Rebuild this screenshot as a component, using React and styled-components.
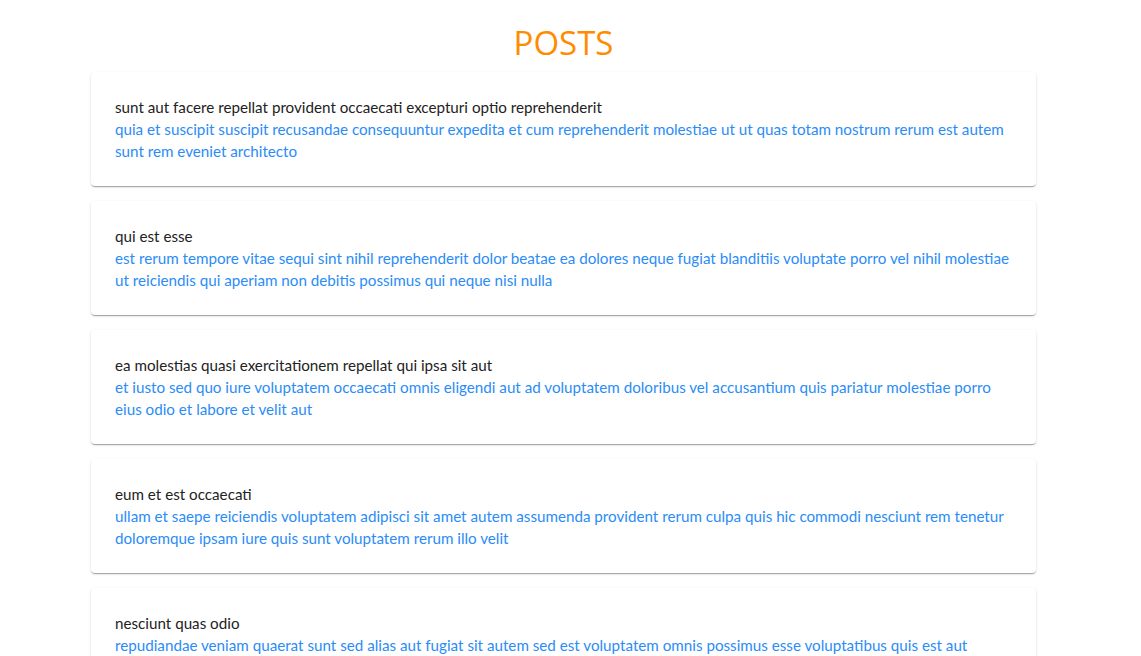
import React from "react";
import styled, { createGlobalStyle } from "styled-components";

const Global = createGlobalStyle`
  html, body { margin: 0; padding: 0; background: #fff; }
  body { font-family: Lato, "Open Sans", sans-serif; }
`;

const Page = styled.main`
  width: 945px;
  margin-left: 91px;
  padding-bottom: 24px;
`;

const Title = styled.h1`
  margin: 0;
  height: 72px;
  display: flex;
  align-items: center;
  justify-content: center;
  padding-top: 12px;
  box-sizing: border-box;
  font-family: "Open Sans", sans-serif;
  font-size: 33px;
  font-weight: 400;
  color: #ff8c00;
`;

const List = styled.div`
  display: flex;
  flex-direction: column;
  gap: 15px;
`;

const Card = styled.article`
  background: #fff;
  border-radius: 4px;
  padding: 24px;
  box-shadow: 0 2px 1px -1px rgba(0,0,0,0.2), 0 1px 1px 0 rgba(0,0,0,0.14), 0 1px 3px 0 rgba(0,0,0,0.12);
  font-family: Lato, "Open Sans", sans-serif;
  font-size: 15.2px;
  line-height: 22px;
`;

const PostTitle = styled.div`
  color: #222;
`;

const Body = styled.div`
  color: #2a8cf7;
`;

const posts = [
  ["sunt aut facere repellat provident occaecati excepturi optio reprehenderit", "quia et suscipit suscipit recusandae consequuntur expedita et cum reprehenderit molestiae ut ut quas totam nostrum rerum est autem sunt rem eveniet architecto"],
  ["qui est esse", "est rerum tempore vitae sequi sint nihil reprehenderit dolor beatae ea dolores neque fugiat blanditiis voluptate porro vel nihil molestiae ut reiciendis qui aperiam non debitis possimus qui neque nisi nulla"],
  ["ea molestias quasi exercitationem repellat qui ipsa sit aut", "et iusto sed quo iure voluptatem occaecati omnis eligendi aut ad voluptatem doloribus vel accusantium quis pariatur molestiae porro eius odio et labore et velit aut"],
  ["eum et est occaecati", "ullam et saepe reiciendis voluptatem adipisci sit amet autem assumenda provident rerum culpa quis hic commodi nesciunt rem tenetur doloremque ipsam iure quis sunt voluptatem rerum illo velit"],
  ["nesciunt quas odio", "repudiandae veniam quaerat sunt sed alias aut fugiat sit autem sed est voluptatem omnis possimus esse voluptatibus quis est aut"],
];

export default function App() {
  return (
    <>
      <Global />
      <Page>
        <Title>POSTS</Title>
        <List>
          {posts.map(([t, b], i) => (
            <Card key={i}>
              <PostTitle>{t}</PostTitle>
              <Body>{b}</Body>
            </Card>
          ))}
        </List>
      </Page>
    </>
  );
}
